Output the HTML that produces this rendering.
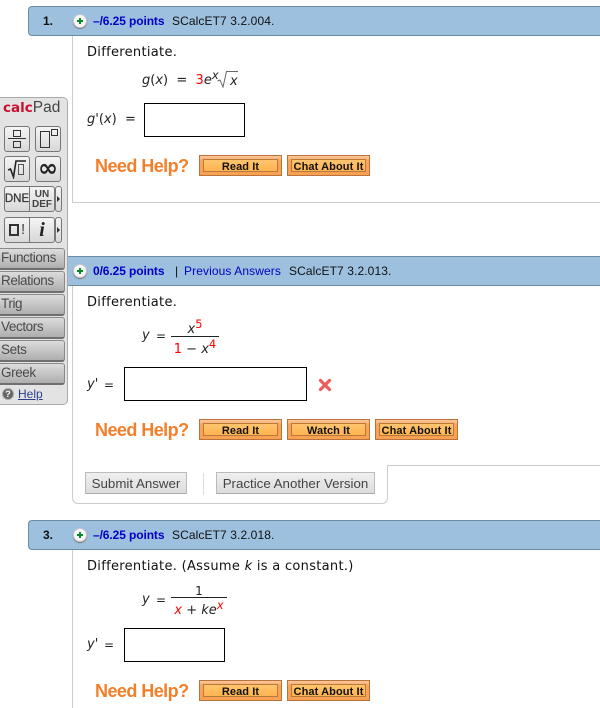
<!DOCTYPE html>
<html><head><meta charset="utf-8"><style>
html,body{margin:0;padding:0;background:#fff}
#p{position:relative;width:600px;height:708px;overflow:hidden;font-family:"Liberation Sans",sans-serif;color:#000}
#p div,#p span.a{position:absolute;box-sizing:border-box}
.t{white-space:nowrap}
.hd{background:#9dc0de;border-top:1px solid #6d8ba3;border-bottom:1px solid #6d8ba3;height:30px}
.plus{width:14px;height:14px;border-radius:50%;background:#f6f6f6;border:1px solid #c8c8c8;box-shadow:0 1px 1px #777}
.plus:before{content:"";position:absolute;left:3px;top:5px;width:6px;height:2px;background:#0a8a2a}
.plus:after{content:"";position:absolute;left:5px;top:3px;width:2px;height:6px;background:#0a8a2a}
.pts{font-size:12px;font-weight:bold;color:#0000c8;white-space:nowrap;line-height:14px;letter-spacing:-.1px}
.ref{font-size:12px;color:#111;white-space:nowrap;line-height:14px;letter-spacing:.1px}
.dv{font-family:"DejaVu Sans",sans-serif;font-size:13px;line-height:16px;white-space:nowrap;color:#111;letter-spacing:.3px}
.m{font-family:"DejaVu Sans",sans-serif;font-size:13px;line-height:16px;white-space:nowrap;color:#222}
.m i{font-style:oblique}
.eq{position:absolute;font-family:"DejaVu Sans",sans-serif;font-size:12px;line-height:16px;color:#222}
.r{color:#f00}
.sup{font-size:11.5px;position:relative;top:-5px;line-height:0}
.ln{background:#ccc}
.inp{background:#fff;border:1px solid #000}
.nh{font-size:18px;font-weight:bold;color:#f47f2a;white-space:nowrap;line-height:20px;letter-spacing:-.55px}
.b{height:21px;width:83px;background:linear-gradient(#fbc9a0,#f9a45c 25%,#f9a052);border:1px solid #b8743a}
.b span{position:absolute;left:3px;right:3px;top:3px;bottom:3px;border:1px solid #b87a3a;background:linear-gradient(#ffc56e,#ffb350);font-size:11px;font-weight:bold;text-align:center;line-height:14px;color:#111;white-space:nowrap;letter-spacing:.1px}
.sb{height:22px;background:linear-gradient(#f0f0f0,#dcdcdc);border:1px solid #bbb;border-bottom-color:#aaa;font-size:13.3px;color:#444;text-align:center;line-height:21px;white-space:nowrap}
.cb{background:linear-gradient(#f4f4f4,#d8d8d8);border:1px solid #777;border-radius:3px}
.tab{left:0;width:65px;height:22px;background:linear-gradient(#dcdcdc,#aeaeae);border:1px solid #8a8a8a;border-left:0;border-bottom:2px solid #6f6f6f;border-radius:0 3px 3px 0;font-size:13.5px;color:#4a4a4a;line-height:18px;padding-left:1px;white-space:nowrap;letter-spacing:-.4px}
</style></head><body><div id="p">

<div class="ln" style="left:72px;top:36px;width:1px;height:167px"></div>
<div class="ln" style="left:72px;top:202px;width:528px;height:1px"></div>
<div class="ln" style="left:72px;top:286px;width:1px;height:212px"></div>
<div style="left:72px;top:465px;width:316px;height:39px;border:1px solid #ccc;border-top:0;border-radius:0 0 6px 6px;background:#fff"></div>
<div class="ln" style="left:387px;top:465px;width:213px;height:1px"></div>
<div class="ln" style="left:72px;top:549px;width:1px;height:159px"></div>

<!-- Q1 -->
<div class="hd" style="left:28px;top:6px;width:572px;border-left:1px solid #6d8ba3;border-radius:4px 0 0 4px"></div>
<div class="t" style="left:43px;top:14px;font-size:12px;font-weight:bold;line-height:14px;color:#111">1.</div>
<div class="plus" style="left:73px;top:14px"></div>
<div class="pts" style="left:93px;top:14px">–/6.25 points</div>
<div class="ref" style="left:172px;top:14px">SCalcET7 3.2.004.</div>
<div class="dv" style="left:87px;top:45px">Differentiate.</div>
<div class="m" style="left:142px;top:73px"><i>g</i>(<i>x</i>) &nbsp;=&nbsp; <span class="r">3</span><i>e</i><span class="sup"><i>x</i></span></div>
<svg style="position:absolute;left:217px;top:70px" width="24" height="18" viewBox="0 0 24 18"><path d="M0.5 11 L3 10 L6 17 L9.5 1.5 L21 1.5" fill="none" stroke="#666" stroke-width="1"/></svg>
<div class="m" style="left:230px;top:74px"><i>x</i></div>
<div class="m" style="left:87px;top:112px"><i>g</i>'(<i>x</i>) &nbsp;=</div>
<div class="inp" style="left:144px;top:103px;width:101px;height:34px"></div>
<div class="nh" style="left:95px;top:156px">Need Help?</div>
<div class="b" style="left:199px;top:155px"><span>Read It</span></div>
<div class="b" style="left:287px;top:155px"><span>Chat About It</span></div>

<!-- Q2 -->
<div class="hd" style="left:0;top:256px;width:600px"></div>
<div class="plus" style="left:73px;top:264px"></div>
<div class="pts" style="left:93px;top:264px">0/6.25 points</div>
<div class="ref" style="left:175px;top:264px">|</div>
<div class="ref" style="left:184px;top:264px;color:#0000c8">Previous Answers</div>
<div class="ref" style="left:289px;top:264px">SCalcET7 3.2.013.</div>
<div class="dv" style="left:87px;top:295px">Differentiate.</div>
<div class="m" style="left:142px;top:328px"><i>y</i></div>
<div class="eq" style="left:156px;top:328px">=</div>
<div class="m" style="left:171px;top:322px;width:48px;text-align:center"><i>x</i><span class="sup r">5</span></div>
<div style="left:171px;top:336px;width:48px;height:1px;background:#222"></div>
<div class="m" style="left:171px;top:342px;width:48px;text-align:center"><span class="r">1</span> − <i>x</i><span class="sup r">4</span></div>
<div class="m" style="left:87px;top:377px"><i>y</i>'</div>
<div class="eq" style="left:104px;top:377px">=</div>
<div class="inp" style="left:124px;top:367px;width:183px;height:34px"></div>
<svg style="position:absolute;left:318px;top:378px" width="14" height="14" viewBox="0 0 14 14"><path d="M2.5 2.5 L11.5 11.5 M11.5 2.5 L2.5 11.5" stroke="#ef5a5a" stroke-width="3.2" stroke-linecap="round"/></svg>
<div class="nh" style="left:95px;top:420px">Need Help?</div>
<div class="b" style="left:199px;top:419px"><span>Read It</span></div>
<div class="b" style="left:287px;top:419px"><span>Watch It</span></div>
<div class="b" style="left:375px;top:419px"><span>Chat About It</span></div>
<div class="sb" style="left:85px;top:472px;width:102px">Submit Answer</div>
<div class="ln" style="left:203px;top:473px;width:1px;height:22px;background:#ddd"></div>
<div class="sb" style="left:216px;top:472px;width:159px">Practice Another Version</div>

<!-- Q3 -->
<div class="hd" style="left:28px;top:520px;width:572px;border-left:1px solid #6d8ba3;border-radius:4px 0 0 4px"></div>
<div class="t" style="left:43px;top:528px;font-size:12px;font-weight:bold;line-height:14px;color:#111">3.</div>
<div class="plus" style="left:73px;top:528px"></div>
<div class="pts" style="left:93px;top:528px">–/6.25 points</div>
<div class="ref" style="left:172px;top:528px">SCalcET7 3.2.018.</div>
<div class="dv" style="left:87px;top:559px">Differentiate. (Assume <i>k</i> is a constant.)</div>
<div class="m" style="left:142px;top:592px"><i>y</i></div>
<div class="eq" style="left:156px;top:592px">=</div>
<div class="m" style="left:171px;top:583px;width:56px;text-align:center;font-size:12px">1</div>
<div style="left:171px;top:597px;width:56px;height:1px;background:#222"></div>
<div class="m" style="left:171px;top:603px;width:56px;text-align:center"><i class="r">x</i> + <i>ke</i><span class="sup r"><i>x</i></span></div>
<div class="m" style="left:87px;top:637px"><i>y</i>'</div>
<div class="eq" style="left:104px;top:637px">=</div>
<div class="inp" style="left:124px;top:628px;width:101px;height:34px"></div>
<div class="nh" style="left:95px;top:681px">Need Help?</div>
<div class="b" style="left:199px;top:680px"><span>Read It</span></div>
<div class="b" style="left:287px;top:680px"><span>Chat About It</span></div>

<!-- calcPad -->
<div style="left:-2px;top:97px;width:70px;height:308px;background:#e3e3e3;border:1px solid #aaa;border-radius:0 5px 5px 0"></div>
<div class="t" style="left:3px;top:100px;font-size:15.5px;line-height:16px;color:#444"><b style="color:#c8102e;font-family:'DejaVu Sans',sans-serif;font-size:13.5px">calc</b>Pad</div>

<div class="cb" style="left:4px;top:126px;width:26px;height:26px"></div>
<div style="left:13px;top:130px;width:8px;height:7px;border:1.5px solid #333"></div>
<div style="left:8px;top:138px;width:18px;height:1px;background:#333"></div>
<div style="left:13px;top:141px;width:8px;height:7px;border:1.5px solid #333"></div>
<div class="cb" style="left:35px;top:126px;width:26px;height:26px"></div>
<div style="left:40px;top:131px;width:10px;height:17px;border:1.5px solid #333"></div>
<div style="left:51px;top:129px;width:7px;height:7px;border:1.5px solid #333"></div>

<div class="cb" style="left:4px;top:156px;width:26px;height:26px"></div>
<svg style="position:absolute;left:7px;top:159px" width="20" height="20" viewBox="0 0 20 20"><path d="M1 11 L3.5 10 L6.5 18 L9 2 L19 2" fill="none" stroke="#222" stroke-width="1.6"/><rect x="11.5" y="5.5" width="5" height="10" fill="none" stroke="#555"/></svg>
<div class="cb" style="left:35px;top:156px;width:26px;height:26px"></div>
<div class="t" style="left:35px;top:157px;width:26px;text-align:center;font:bold 24px/22px 'DejaVu Sans',sans-serif;color:#222">∞</div>

<div class="cb" style="left:4px;top:186px;width:26px;height:26px;border-radius:3px 0 0 3px"></div>
<div class="t" style="left:4px;top:193px;width:26px;text-align:center;font-size:11.5px;line-height:13px;color:#333;-webkit-text-stroke:.25px #333">DNE</div>
<div class="cb" style="left:29px;top:186px;width:26px;height:26px;border-radius:0 3px 3px 0"></div>
<div class="t" style="left:29px;top:190px;width:26px;text-align:center;font-size:10px;font-weight:bold;line-height:10px;color:#444">UN<br>DEF</div>
<div class="cb" style="left:55px;top:186px;width:7px;height:26px"></div>
<div style="left:57px;top:196px;width:0;height:0;border-left:3px solid #333;border-top:3px solid transparent;border-bottom:3px solid transparent"></div>

<div class="cb" style="left:4px;top:217px;width:26px;height:26px;border-radius:3px 0 0 3px"></div>
<div style="left:9px;top:224px;width:10px;height:12px;border:2px solid #333"></div>
<div class="t" style="left:21px;top:222px;font-size:15px;line-height:16px;color:#444">!</div>
<div class="cb" style="left:29px;top:217px;width:26px;height:26px;border-radius:0 3px 3px 0"></div>
<div class="t" style="left:29px;top:219px;width:26px;text-align:center;font:italic bold 20px/22px 'Liberation Serif',serif;color:#222">i</div>
<div class="cb" style="left:55px;top:217px;width:7px;height:26px"></div>
<div style="left:57px;top:227px;width:0;height:0;border-left:3px solid #333;border-top:3px solid transparent;border-bottom:3px solid transparent"></div>

<div class="tab" style="top:248px">Functions</div>
<div class="tab" style="top:271px">Relations</div>
<div class="tab" style="top:294px">Trig</div>
<div class="tab" style="top:317px">Vectors</div>
<div class="tab" style="top:340px">Sets</div>
<div class="tab" style="top:363px">Greek</div>
<div style="left:2px;top:388px;width:12px;height:12px;border-radius:50%;background:#666;border:1px solid #aaa;color:#fff;font:bold 9px/10px 'Liberation Sans',sans-serif;text-align:center">?</div>
<div class="t" style="left:18px;top:387px;font-size:12px;line-height:14px;color:#2b3f8f;text-decoration:underline">Help</div>
</div></body></html>
